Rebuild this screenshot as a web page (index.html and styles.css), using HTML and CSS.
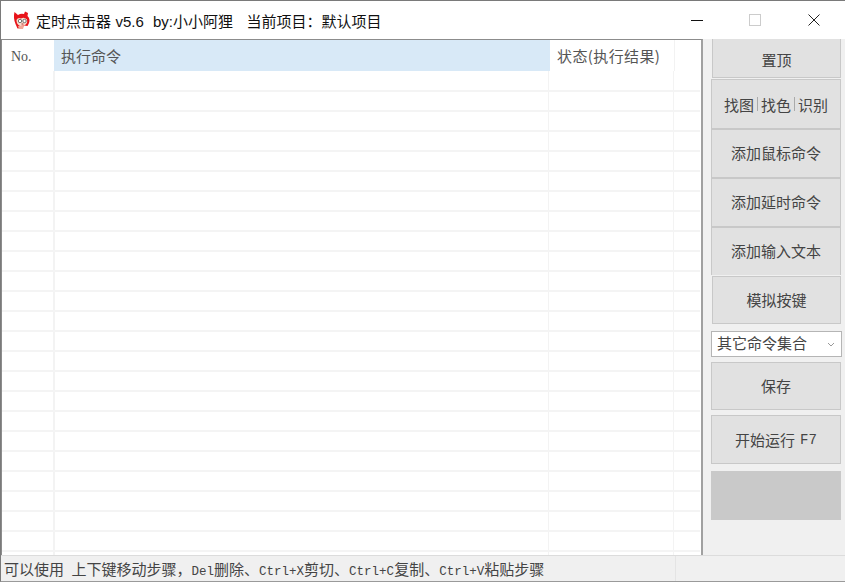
FILE: index.html
```html
<!DOCTYPE html>
<html lang="zh-CN">
<head>
<meta charset="utf-8">
<title>定时点击器</title>
<link rel="stylesheet" href="styles.css">
</head>
<body>
<div class="window">
  <header class="titlebar">
    <svg class="logo" width="18" height="20" viewBox="0 0 18 20">
      <path d="M1.5 2 L5 5 Q8 3 11 4 L12 1.500 L15 3 L14.500 6 Q17.500 9 16 13 L14.500 16 L11 15.500 L9 18 L4.500 18.500 L2.500 14 Q0 8 1.500 2Z" fill="#e8141a"/>
      <path d="M3.500 10 Q5 7 8 8.500 Q11 6.500 14 9.500 Q15 14 11 15.500 L7 16 Q3.500 14.500 3.500 10Z" fill="#f8dccb"/>
      <circle cx="7" cy="11" r="1.700" fill="#fff" stroke="#555" stroke-width=".8"/>
      <circle cx="11.500" cy="11" r="1.700" fill="#fff" stroke="#555" stroke-width=".8"/>
      <path d="M8.500 14 H10.500" stroke="#a33" stroke-width="1"/>
      <path d="M5 16 H11 L10 19 H6Z" fill="#f0a898"/>
    </svg>
    <span class="app-title">定时点击器 v5.6&nbsp; by:小小阿狸&nbsp;&nbsp; 当前项目：默认项目</span>
    <div class="win-controls">
      <svg class="ctl" width="14" height="14" viewBox="0 0 14 14"><path d="M2 7.500 H14" stroke="#111" stroke-width="1"/></svg>
      <svg class="ctl" width="14" height="14" viewBox="0 0 14 14"><rect x="1.500" y="1.500" width="11" height="11" fill="none" stroke="#ccc"/></svg>
      <svg class="ctl" width="14" height="14" viewBox="0 0 14 14"><path d="M1.500 1.500 L12.500 12.500 M12.500 1.500 L1.500 12.500" stroke="#222" stroke-width="1"/></svg>
    </div>
  </header>
  <div class="content">
    <main class="table">
      <div class="thead">
        <div class="c-no">No.</div>
        <div class="c-cmd">执行命令</div>
        <div class="c-state">状态(执行结果)</div>
        <div class="c-end"></div>
      </div>
      <div class="tbody">
        <div class="row"></div><div class="row"></div><div class="row"></div><div class="row"></div>
        <div class="row"></div><div class="row"></div><div class="row"></div><div class="row"></div>
        <div class="row"></div><div class="row"></div><div class="row"></div><div class="row"></div>
        <div class="row"></div><div class="row"></div><div class="row"></div><div class="row"></div>
        <div class="row"></div><div class="row"></div><div class="row"></div><div class="row"></div>
        <div class="row"></div><div class="row"></div><div class="row"></div><div class="row"></div>
      </div>
    </main>
    <aside class="side">
      <button class="btn b-top">置顶</button>
      <button class="btn b-find"><span>找图</span><i class="sep"></i><span>找色</span><i class="sep"></i><span>识别</span></button>
      <button class="btn b-add">添加鼠标命令</button>
      <button class="btn b-add">添加延时命令</button>
      <button class="btn b-add b-noedge">添加输入文本</button>
      <button class="btn b-key">模拟按键</button>
      <div class="select"><span>其它命令集合</span>
        <svg width="8" height="5" viewBox="0 0 8 5"><path d="M1 1 L4 4 L7 1" fill="none" stroke="#999"/></svg>
      </div>
      <button class="btn b-save">保存</button>
      <button class="btn b-run">开始运行 <span class="mono-key">F7</span></button>
      <div class="blank"></div>
    </aside>
  </div>
  <footer class="status">
    <span>可以使用<span class="mono"> </span>上下键移动步骤，<span class="mono">Del</span>删除、<span class="mono">Ctrl+X</span>剪切、<span class="mono">Ctrl+C</span>复制、<span class="mono">Ctrl+V</span>粘贴步骤</span>
    <i class="grip"></i>
  </footer>
</div>
</body>
</html>
```
FILE: styles.css
```css
* { box-sizing: border-box; }
html, body { margin: 0; padding: 0; }
body { width: 845px; height: 582px; overflow: hidden; background: #fff; font-family: "Noto Sans CJK SC", sans-serif; }

.window { width: 845px; height: 582px; display: flex; flex-direction: column; border-top: 1px solid #7a7a7a; border-left: 1px solid #7a7a7a; border-bottom: 1px solid #9a9a9a; background: #f0f0f0; }

.titlebar { height: 38px; flex: none; display: flex; align-items: center; background: #fff; padding-left: 12px; }
.logo { flex: none; margin-right: 5px; margin-top: -1px; }
.app-title { font-family: "Liberation Sans", "Noto Sans CJK SC", sans-serif; font-size: 15px; color: #111; white-space: nowrap; word-spacing: 0.350px; }
.win-controls { margin-left: auto; display: flex; gap: 45px; padding-right: 24px; align-items: center; }
.ctl { display: block; }

.content { flex: 1; min-height: 0; display: flex; }

.table { width: 702px; flex: none; border-top: 1px solid #8c8c8c; border-left: 1px solid #8c8c8c; border-right: 2px solid #a0a0a0; background: #fff; overflow: hidden; display: flex; flex-direction: column; }
.thead { height: 31px; flex: none; display: flex; font-size: 15px; color: #555; }
.thead > div { display: flex; align-items: center; line-height: 1; }
.c-no { width: 52px; padding-left: 9px; font-family: "Liberation Serif", serif; font-size: 14px; padding-top: 3px; }
.c-cmd { width: 496px; padding-left: 7px; background: #d8e9f7; }
.c-state { width: 125px; padding-left: 7px; border-right: 1px solid #f2f2f2; white-space: nowrap; letter-spacing: 0.4px; }
.c-end { flex: 1; }

.tbody { flex: 1; padding-top: 1px; background-image: linear-gradient(to right, transparent 51px, #f3f3f3 51px, #f3f3f3 53px, transparent 53px, transparent 546px, #f3f3f3 546px, #f3f3f3 547px, transparent 547px, transparent 671px, #f3f3f3 671px, #f3f3f3 672px, transparent 672px); }
.row { height: 20px; border-bottom: 2px solid #f4f4f4; margin-right: 1px; }

.side { flex: 1; min-width: 0; display: flex; flex-direction: column; padding-left: 8px; }
.btn { display: flex; align-items: center; justify-content: center; width: 130px; padding: 0 0 2px; flex: none; background: #e1e1e1; border: 1px solid #c8c8c8; font-family: "Noto Sans CJK SC", sans-serif; font-size: 15px; color: #444; border-radius: 0; }
.b-top { height: 39px; margin-left: 1px; width: 129px; border-top: 0; padding: 3px 0 0; }
.b-find { height: 50px; margin-top: 1px; padding: 0; }
.b-find .sep { width: 1px; height: 14px; background: #aaa; margin: 0 3px; }
.b-add { height: 49px; }
.b-noedge { height: 48px; border-bottom: 0; }
.b-key { height: 48px; width: 129px; margin-left: 1px; margin-top: 1px; }
.select { width: 131px; height: 26px; margin-top: 7px; flex: none; background: #fff; border: 1px solid #b5b5b5; display: flex; align-items: center; justify-content: space-between; padding: 0 6px 3px 5px; font-size: 15px; color: #444; }
.select svg { margin-top: 3px; }
.b-save { height: 48px; margin-top: 5px; }
.b-run { height: 49px; margin-top: 5px; gap: 5px; padding: 0; }
.mono-key { font-family: "Liberation Mono", monospace; font-size: 14px; }
.blank { width: 130px; height: 49px; margin-top: 7px; background: #c9c9c9; flex: none; }

.status { height: 26px; flex: none; display: flex; align-items: center; justify-content: space-between; padding-left: 3px; border-top: 1px solid #dcdcdc; font-size: 15px; color: #444; white-space: pre; background: #f0f0f0; }
.mono { font-family: "Liberation Mono", monospace; font-size: 12.500px; }
.grip { width: 170px; height: 100%; border-left: 1px solid #e4e4e4; }
```
